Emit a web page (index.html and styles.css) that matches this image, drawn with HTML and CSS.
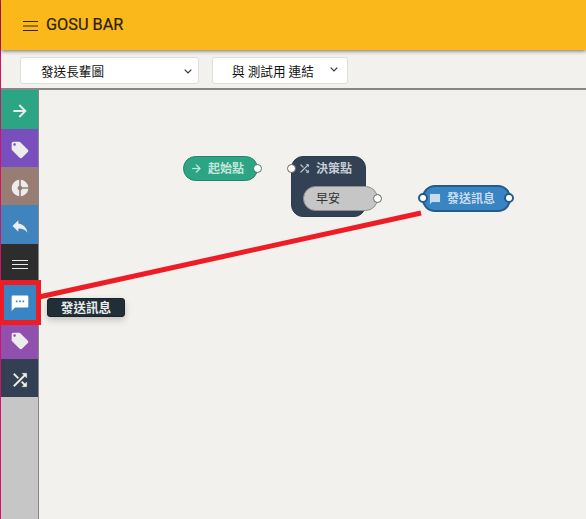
FILE: index.html
```html
<!DOCTYPE html>
<html lang="zh-Hant">
<head>
<meta charset="utf-8">
<title>GOSU BAR</title>
<link rel="stylesheet" href="styles.css">
</head>
<body>
<svg class="defs" width="0" height="0">
  <symbol id="arrow" viewBox="0 0 24 24"><path d="M12 4l-1.700 1.700L15.600 10.900H4v2.200h11.600l-5.300 5.200L12 20l8-8z"/></symbol>
  <symbol id="tag" viewBox="0 0 24 24"><path d="M21.41 11.58l-9-9C12.05 2.22 11.55 2 11 2H4c-1.1 0-2 .9-2 2v7c0 .55.22 1.05.59 1.42l9 9c.36.36.86.58 1.41.58s1.05-.22 1.41-.59l7-7c.37-.36.59-.86.59-1.41s-.23-1.06-.59-1.42zM5.500 7C4.670 7 4 6.330 4 5.500S4.670 4 5.500 4 7 4.670 7 5.500 6.330 7 5.500 7z"/></symbol>
  <symbol id="shuffle" viewBox="0 0 24 24"><path d="M10.590 9.170L5.410 4 4 5.410l5.170 5.170 1.420-1.410zM14.500 4l2.040 2.040L4 18.590 5.410 20 17.960 7.460 20 9.500V4h-5.500zm.33 9.410l-1.410 1.410 3.130 3.130L14.500 20H20v-5.500l-2.040 2.040-3.130-3.130z"/></symbol>
</svg>
<div class="app">
  <header class="header">
    <svg class="menu-icon" viewBox="0 0 15 10"><path d="M0 .5h15M0 5h15M0 9.500h15"/></svg>
    <h1 class="title">GOSU BAR</h1>
  </header>
  <div class="toolbar">
    <div class="select flow"><span>發送長輩圖</span><svg class="chevron" viewBox="0 0 8 5"><path d="M.7.700L4 4 7.300.700"/></svg></div>
    <div class="select link"><span>與 測試用 連結</span><svg class="chevron" viewBox="0 0 8 5"><path d="M.7.700L4 4 7.300.700"/></svg></div>
  </div>
  <main class="workspace">
    <nav class="palette">
      <div class="tool start"><svg class="icon"><use href="#arrow"/></svg></div>
      <div class="tool label"><svg class="icon"><use href="#tag"/></svg></div>
      <div class="tool chart"><svg class="icon" viewBox="0 0 24 24"><path d="M11 2.050V9.200a3 3 0 0 0 0 5.600v7.150a10 10 0 0 1 0-19.900zM13 2.050V9.200A3 3 0 0 1 14.800 11.200h7.150A10 10 0 0 0 13 2.050zM13 14.800v7.150A10 10 0 0 0 21.950 12.800h-7.150A3 3 0 0 1 13 14.800z"/></svg></div>
      <div class="tool reply"><svg class="icon" viewBox="0 0 24 24"><path d="M10 9V5l-7 7 7 7v-4.100c5 0 8.500 1.600 11 5.100-1-5-4-10-11-11z"/></svg></div>
      <div class="tool list"><svg class="icon lines" viewBox="0 0 20 20"><path d="M2 5.500h16M2 9.500h16M2 13.500h16"/></svg></div>
      <div class="tool message"><svg class="icon" viewBox="0 0 24 24"><path d="M21 3H3a1 1 0 0 0-1 1v17.500L6 17.500h15a1 1 0 0 0 1-1V4a1 1 0 0 0-1-1zM9 11H7V9h2v2zm4 0h-2V9h2v2zm4 0h-2V9h2v2z"/></svg></div>
      <div class="tool label-alt"><svg class="icon"><use href="#tag"/></svg></div>
      <div class="tool decision"><svg class="icon"><use href="#shuffle"/></svg></div>
    </nav>
    <section class="canvas">
      <div class="node node-start"><svg class="node-icon"><use href="#arrow"/></svg><span>起始點</span><i class="port out"></i></div>
      <div class="node node-decision">
        <div class="node-head"><svg class="node-icon"><use href="#shuffle"/></svg><span>決策點</span></div>
        <div class="choice">早安<i class="port out"></i></div>
        <i class="port in"></i>
      </div>
      <div class="node node-message"><svg class="node-icon" viewBox="0 0 24 24"><path d="M22 2H2v20l4-4h16z"/></svg><span>發送訊息</span><i class="port in"></i><i class="port out"></i></div>
      <div class="tooltip">發送訊息</div>
    </section>
  </main>
  <svg class="annotation" viewBox="0 0 586 519"><path class="pointer" d="M39 297L421 213"/><path class="frame" d="M1.500 282.500h37v40h-37z"/></svg>
</div>
</body>
</html>
```

FILE: styles.css
```css
* { box-sizing: border-box; }
body {
  margin: 0;
  overflow: hidden;
  background: #f2f1ed;
  font-family: Roboto, "Noto Sans CJK TC", sans-serif;
  color: #222;
}
.defs { position: absolute; }
.app {
  position: relative;
  display: flex;
  flex-direction: column;
  height: 519px;
  border-left: 1px solid #cf1563;
}
.header {
  position: relative;
  z-index: 1;
  display: flex;
  flex: 0 0 50px;
  padding-left: 22px;
  background: #fbb81a;
  box-shadow: 0 1px 4px rgba(0, 0, 0, .55);
}
.menu-icon { width: 15px; height: 10px; margin-top: 21px; fill: none; stroke: #332609; stroke-width: 1; }
.title { margin: 15px 0 0 8px; font-size: 16.3px; line-height: 20px; font-weight: 400; color: #2a1e05; -webkit-text-stroke: .2px #2a1e05; white-space: nowrap; }
.toolbar {
  display: flex;
  flex: 0 0 40px;
  gap: 13px;
  padding: 7px 0 0 19px;
  border-bottom: 2px solid #878787;
}
.select {
  display: flex;
  justify-content: space-between;
  height: 27px;
  padding: 0 6px 0 20px;
  border: 1px solid #dededb;
  border-radius: 3px;
  background: #fff;
  font-size: 12.6px;
  line-height: 27px;
  white-space: nowrap;
  color: #111;
}
.flow { width: 179px; }
.link { width: 136px; padding-left: 19px; padding-right: 9px; }
.chevron { width: 8px; height: 5px; margin-top: 11px; fill: none; stroke: #333; stroke-width: 1.2; }
.link .chevron { margin-top: 9px; }
.workspace { display: flex; flex: 1; min-height: 0; }
.palette { flex: 0 0 38px; background: #c6c6c6; border-right: 1px solid #878787; }
.tool { display: flex; align-items: center; justify-content: center; height: 38px; }
.icon { width: 20px; height: 20px; fill: #ececec; }
.lines { fill: none; stroke: #ececec; stroke-width: 1; }
.start { height: 39px; padding-top: 2px; background: #2ba584; }
.label { padding-top: 3px; background: #784fbc; }
.chart { padding-top: 3px; background: #987d74; }
.reply { height: 39px; padding-top: 2px; background: #4084bd; }
.list { padding-top: 3px; background: #2d2d2d; }
.message { padding-top: 3px; background: #3984c3; }
.message .icon { fill: #fff; }
.label-alt { height: 39px; padding-top: 3px; background: #9150ad; }
.decision { padding-top: 3px; background: #334053; }
.decision .icon { fill: #f2f0ea; stroke: #f2f0ea; stroke-width: .5; }
.canvas { position: relative; flex: 1; }
.node {
  position: absolute;
  display: flex;
  align-items: center;
  font-size: 12px;
  line-height: 18px;
  font-weight: 700;
  color: #c5e4db;
  white-space: nowrap;
}
.node-icon { width: 13px; height: 13px; fill: currentColor; stroke: currentColor; stroke-width: .3; }
.node-start {
  left: 144px;
  top: 66px;
  width: 75px;
  height: 25px;
  gap: 5px;
  padding-left: 6px;
  border: 1px solid #278466;
  border-radius: 13px;
  background: #2ba584;
}
.node-decision {
  left: 252px;
  top: 66px;
  width: 75px;
  height: 61px;
  display: block;
  border: 1px solid #2d3b4e;
  border-radius: 12px;
  background: #334155;
  color: #c7ccd3;
}
.node-head { display: flex; align-items: center; gap: 5px; height: 23px; padding-left: 6px; }
.choice {
  position: relative;
  width: 75px;
  height: 25px;
  margin: 6px 0 0 11px;
  padding-left: 12px;
  border: 1px solid #8f8f8f;
  border-radius: 13px;
  background: #c6c6c6;
  line-height: 24px;
  font-weight: 400;
  color: #333;
}
.node-message {
  left: 383px;
  top: 95px;
  width: 89px;
  height: 27px;
  gap: 6px;
  padding-left: 5px;
  border: 2px solid #245b89;
  border-radius: 13px;
  background: #3984c3;
  color: #c8ddef;
}
.node-message .node-icon { width: 12px; height: 12px; }
.port {
  position: absolute;
  top: 7px;
  width: 9px;
  height: 9px;
  border: 1px solid #666;
  border-radius: 50%;
  background: #fff;
}
.port.in { left: -5px; }
.port.out { right: -5px; }
.node-start .port { border-color: #477d6c; }
.node-message .port { top: 6px; width: 10px; height: 10px; border: 2px solid #245b89; }
.node-message .port.in { left: -6px; }
.node-message .port.out { right: -5px; }
.tooltip {
  position: absolute;
  left: 8px;
  top: 208px;
  width: 78px;
  height: 19px;
  border: 1px solid #17242b;
  border-radius: 3px;
  background: #212e36;
  box-shadow: 0 3px 7px rgba(0, 0, 0, .2);
  font-size: 12.6px;
  line-height: 17px;
  font-weight: 700;
  text-align: center;
  color: #e9ebec;
}
.annotation { position: absolute; left: -1px; top: 0; z-index: 2; width: 586px; height: 519px; fill: none; stroke: #ee1c25; }
.pointer { stroke-width: 5; }
.frame { stroke-width: 5; }
```
